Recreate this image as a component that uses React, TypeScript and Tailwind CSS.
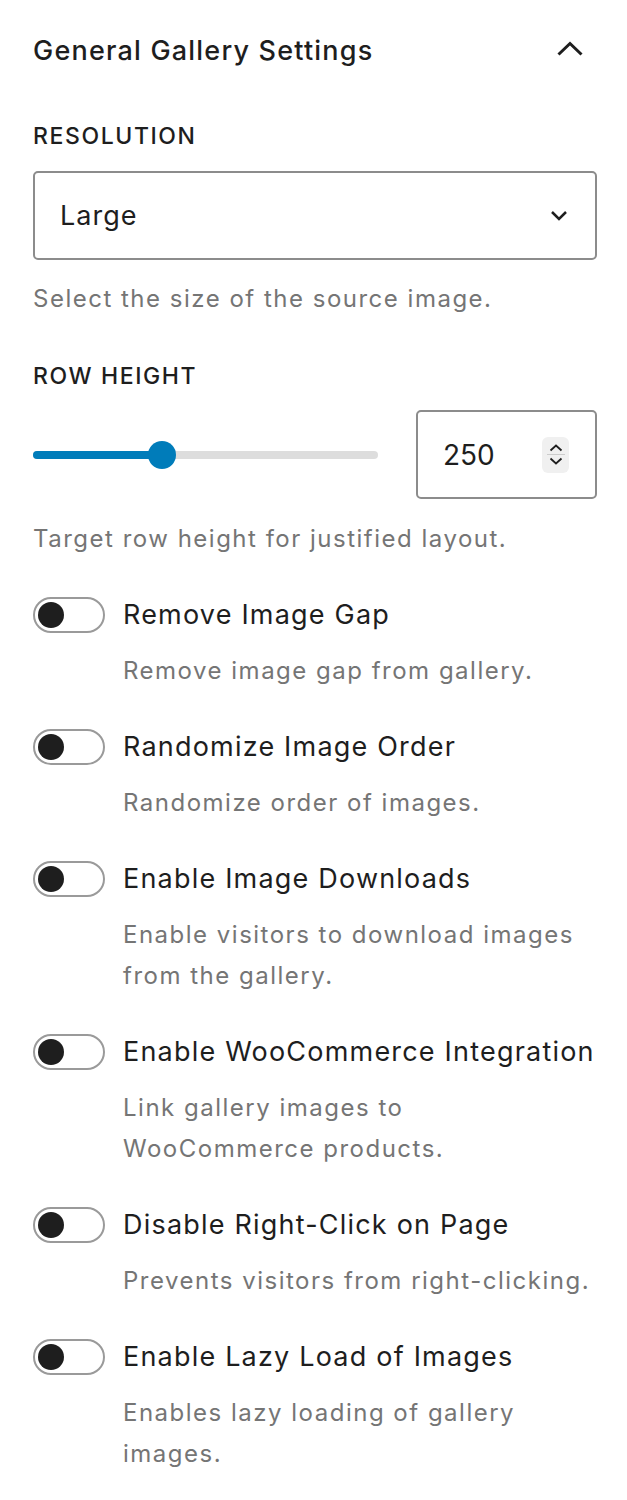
import { useState } from 'react'

interface ToggleItem {
  label: string
  help: string
}

const TOGGLES: ToggleItem[] = [
  { label: 'Remove Image Gap', help: 'Remove image gap from gallery.' },
  { label: 'Randomize Image Order', help: 'Randomize order of images.' },
  { label: 'Enable Image Downloads', help: 'Enable visitors to download images from the gallery.' },
  { label: 'Enable WooCommerce Integration', help: 'Link gallery images to WooCommerce products.' },
  { label: 'Disable Right-Click on Page', help: 'Prevents visitors from right-clicking.' },
  { label: 'Enable Lazy Load of Images', help: 'Enables lazy loading of gallery images.' },
]

function Toggle({ on, onClick }: { on: boolean; onClick: () => void }) {
  return (
    <button
      onClick={onClick}
      className={`relative w-[72px] h-[36px] shrink-0 rounded-full border-2 ${on ? 'bg-[#007cba] border-[#007cba]' : 'bg-white border-[#9a9a9a]'}`}
    >
      <span
        className={`absolute top-[3px] w-[26px] h-[26px] rounded-full ${on ? 'left-[39px] bg-white' : 'left-[3px] bg-[#1e1e1e]'}`}
      />
    </button>
  )
}

export default function App() {
  const [value, setValue] = useState(250)
  const [flags, setFlags] = useState<boolean[]>(TOGGLES.map(() => false))
  // range 100..500
  const pct = Math.min(100, Math.max(0, ((value - 100) / 400) * 100))

  function flip(i: number) {
    setFlags((prev) => prev.map((f, j) => (j === i ? !f : f)))
  }

  return (
    <div className="bg-white w-[627px] pl-[33px] pr-[30px] pb-10 text-[#1e1e1e]" style={{ fontFamily: 'Inter, "Noto Sans", sans-serif' }}>
      <div className="h-[100px] pt-[2px] flex items-center justify-between">
        <h2 className="text-[27px] font-medium leading-[32px] tracking-[1.2px]">General Gallery Settings</h2>
        <svg width="28" height="16" viewBox="0 0 28 16" className="mr-[13px] mb-[4px]" fill="none" stroke="#1e1e1e" strokeWidth="3">
          <path d="M2.5 13.5L14 2.5l11.5 11" />
        </svg>
      </div>

      <div className="mt-[20px] text-[23px] font-medium leading-[32px] uppercase tracking-[1.6px]">Resolution</div>
      <div className="mt-[19px] h-[89px] border-2 border-[#8c8c8c] rounded-[5px] flex items-center justify-between pl-[25px] pr-[27px]">
        <span className="text-[27px] leading-[32px] tracking-[1px]">Large</span>
        <svg width="18" height="11" viewBox="0 0 18 11" fill="none" stroke="#1e1e1e" strokeWidth="2.5">
          <path d="M2 2l7 7 7-7" />
        </svg>
      </div>
      <p className="mt-[23px] text-[24px] leading-[32px] text-[#757575] tracking-[1.5px]">Select the size of the source image.</p>

      <div className="mt-[45px] text-[23px] font-medium leading-[32px] uppercase tracking-[1.6px]">Row height</div>
      <div className="mt-[18px] flex items-center">
        <div className="relative w-[345px] h-[8px] rounded-full bg-[#dddddd]">
          <div className="absolute left-0 top-0 h-full rounded-full bg-[#007cba]" style={{ width: `${pct}%` }} />
          <div
            className="absolute top-1/2 w-[28px] h-[28px] -translate-x-1/2 -translate-y-1/2 rounded-full bg-[#007cba]"
            style={{ left: `${pct}%` }}
          />
        </div>
        <div className="ml-auto w-[181px] h-[89px] border-2 border-[#8c8c8c] rounded-[5px] flex items-center pl-[25px] pr-[26px]">
          <input
            value={value}
            onChange={(e) => setValue(Number(e.target.value) || 0)}
            className="w-full text-[28px] leading-[32px] outline-none bg-transparent"
          />
          <div className="shrink-0 w-[27px] h-[36px] rounded-[6px] bg-[#f0f0f0] flex flex-col items-center justify-center">
            <svg width="18" height="12" viewBox="0 0 18 12" fill="none" stroke="#1e1e1e" strokeWidth="1.8">
              <path d="M3.5 8.5l5.5-5 5.5 5" />
            </svg>
            <div className="w-[18px] h-px bg-[#cccccc]" />
            <svg width="18" height="12" viewBox="0 0 18 12" fill="none" stroke="#1e1e1e" strokeWidth="1.8">
              <path d="M3.5 3.5l5.5 5 5.5-5" />
            </svg>
          </div>
        </div>
      </div>
      <p className="mt-[24px] text-[24px] leading-[32px] text-[#757575] tracking-[1.5px]">Target row height for justified layout.</p>

      <div className="mt-[42px] flex flex-col gap-[38px]">
        {TOGGLES.map((t, i) => (
          <div key={t.label}>
            <div className="h-[36px] flex items-center gap-[18px]">
              <Toggle on={flags[i]} onClick={() => flip(i)} />
              <span className="text-[27px] leading-[32px] tracking-[1.2px] whitespace-nowrap">{t.label}</span>
            </div>
            <p className="mt-[17px] pl-[90px] text-[24px] leading-[41px] text-[#757575] tracking-[1.5px]">{t.help}</p>
          </div>
        ))}
      </div>
    </div>
  )
}
